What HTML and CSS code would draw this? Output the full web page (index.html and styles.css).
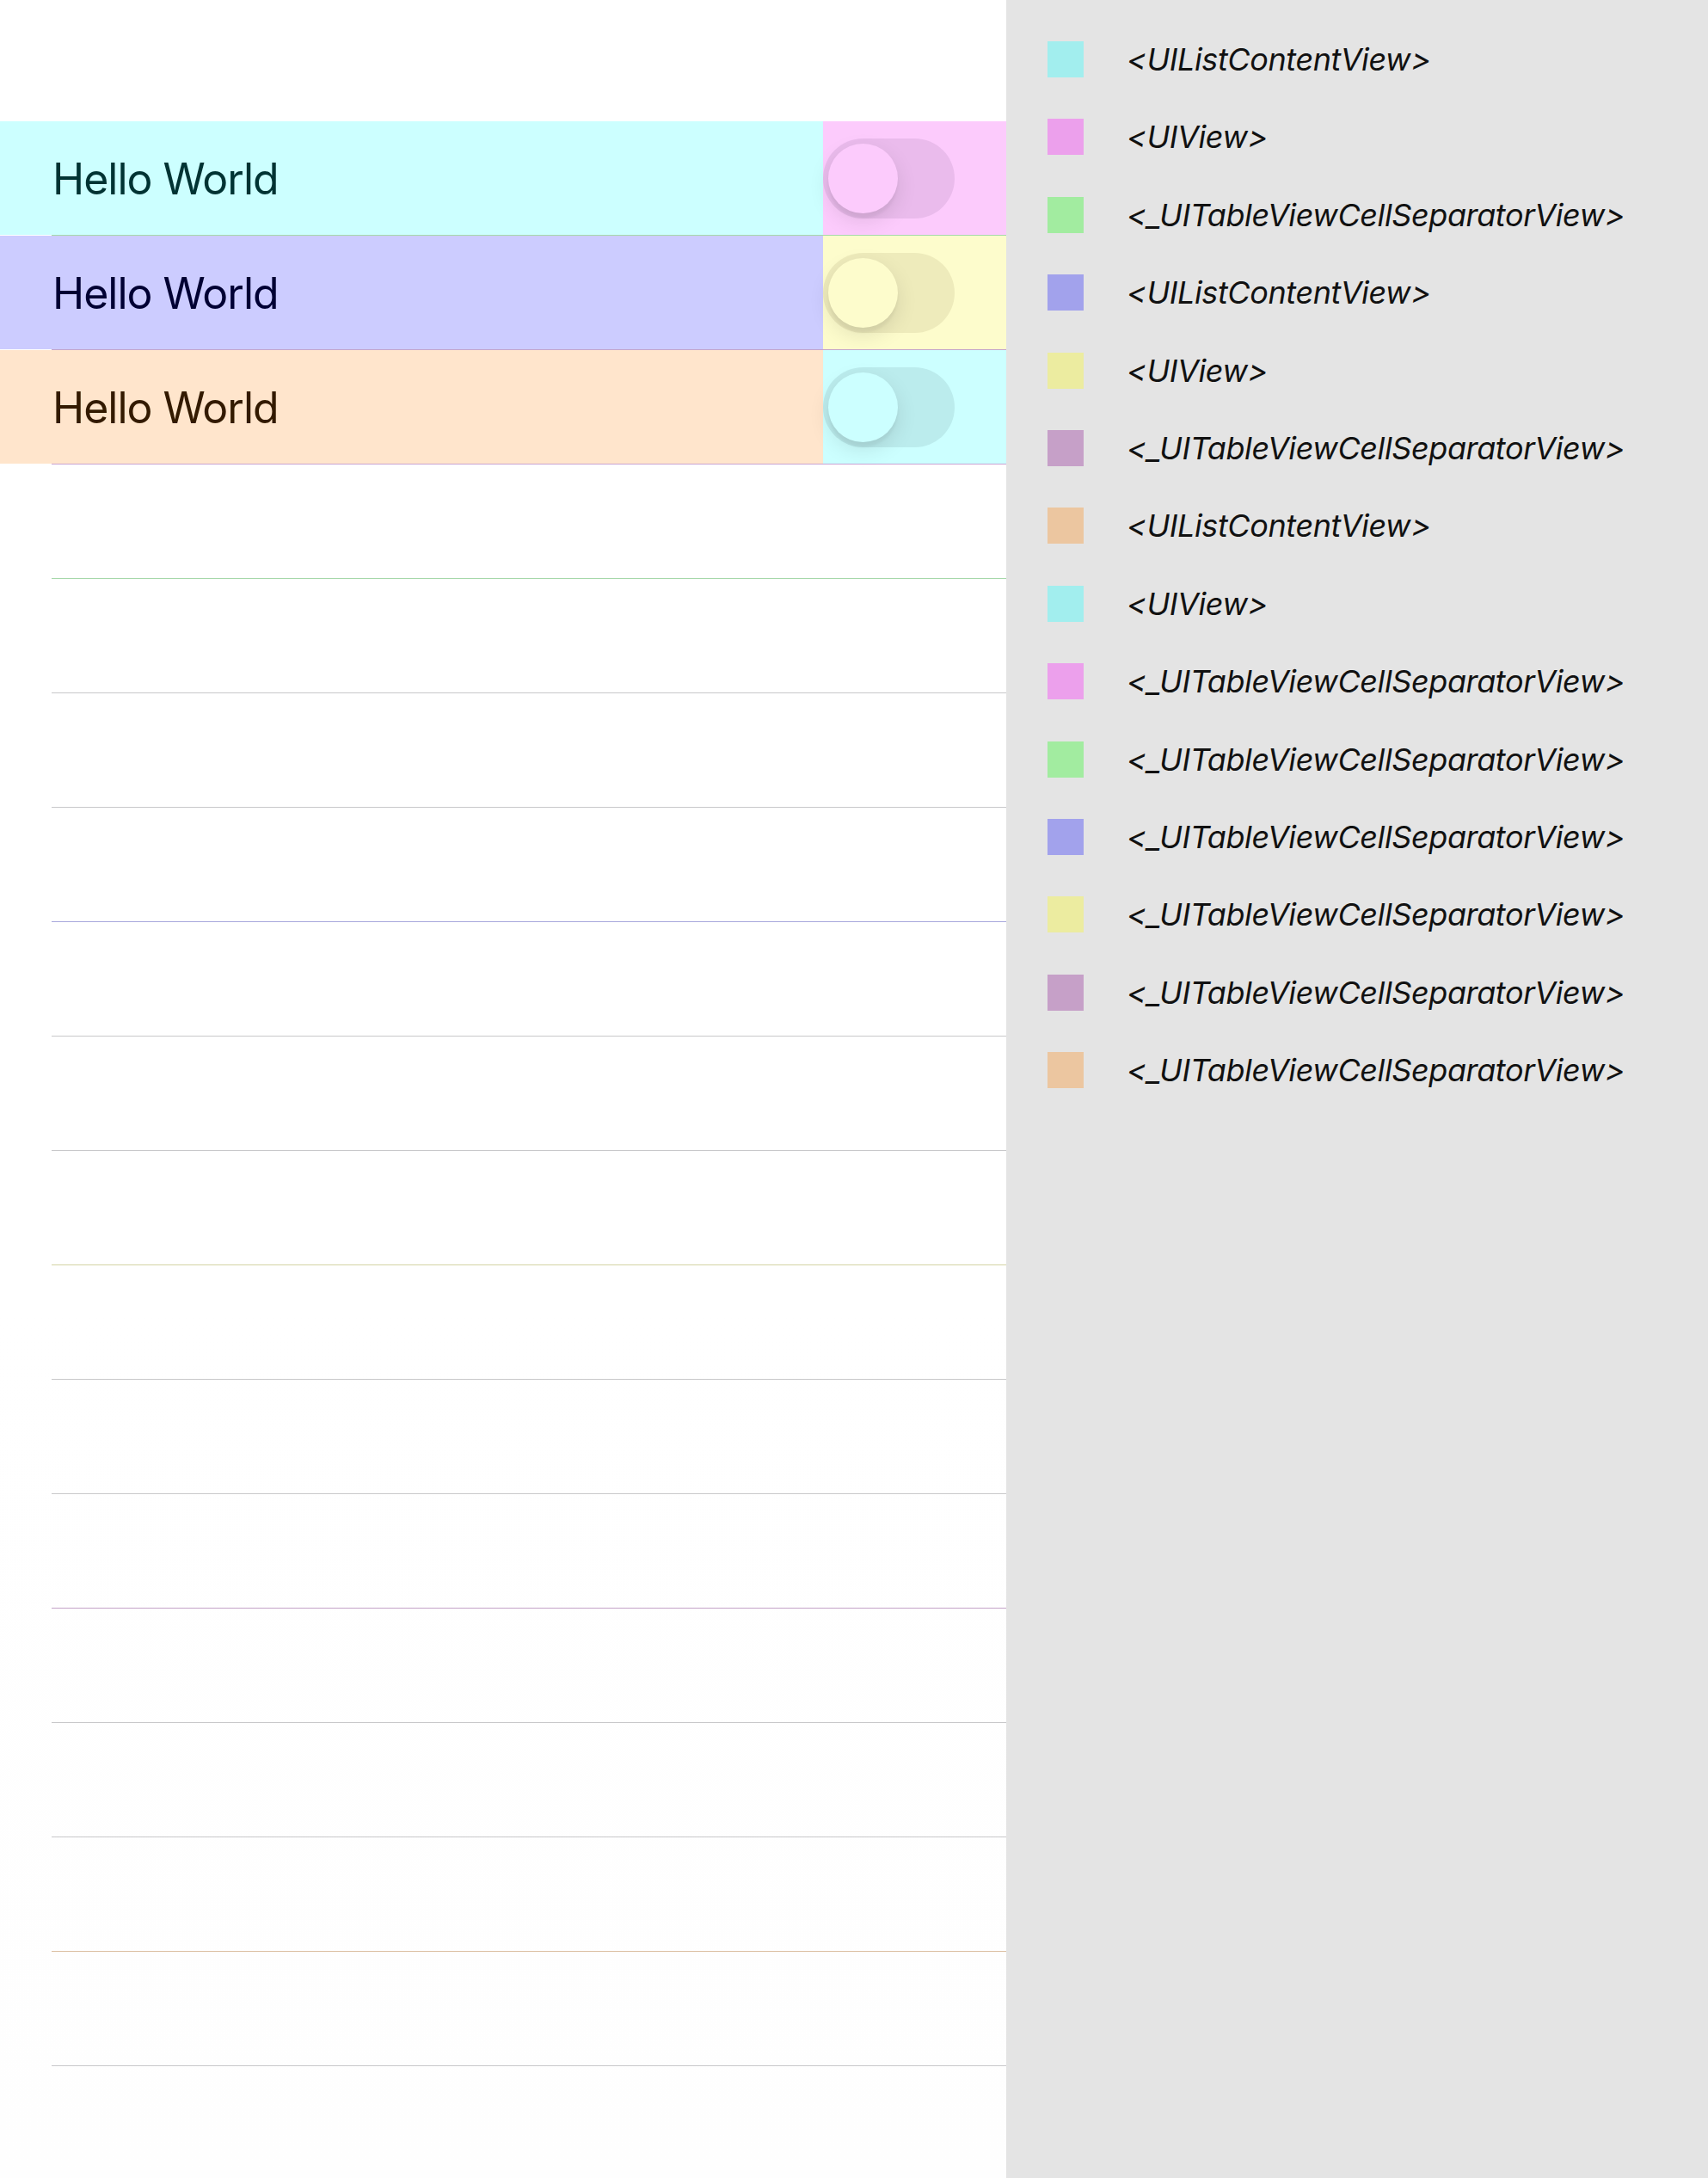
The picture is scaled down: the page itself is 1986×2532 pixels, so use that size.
FILE: index.html
```html
<!DOCTYPE html>
<html>
<head>
<meta charset="utf-8">
<link rel="stylesheet" href="styles.css">
</head>
<body>
<div class="screen">
  <div class="table">
    <div class="row">
      <div class="cell">
        <div class="content c1"><span class="label t1">Hello World</span></div>
        <div class="accessory a1"><div class="switch s1"><div class="thumb"></div></div></div>
      </div>
      <div class="sep sep-green"></div>
    </div>
    <div class="row">
      <div class="cell">
        <div class="content c2"><span class="label t2">Hello World</span></div>
        <div class="accessory a2"><div class="switch s2"><div class="thumb"></div></div></div>
      </div>
      <div class="sep sep-purple"></div>
    </div>
    <div class="row">
      <div class="cell">
        <div class="content c3"><span class="label t3">Hello World</span></div>
        <div class="accessory a3"><div class="switch s3"><div class="thumb"></div></div></div>
      </div>
      <div class="sep sep-pink"></div>
    </div>
    <div class="row"><div class="cell"></div><div class="sep sep-green"></div></div>
    <div class="row"><div class="cell"></div><div class="sep"></div></div>
    <div class="row"><div class="cell"></div><div class="sep"></div></div>
    <div class="row"><div class="cell"></div><div class="sep sep-blue"></div></div>
    <div class="row"><div class="cell"></div><div class="sep"></div></div>
    <div class="row"><div class="cell"></div><div class="sep"></div></div>
    <div class="row"><div class="cell"></div><div class="sep sep-yellow"></div></div>
    <div class="row"><div class="cell"></div><div class="sep"></div></div>
    <div class="row"><div class="cell"></div><div class="sep"></div></div>
    <div class="row"><div class="cell"></div><div class="sep sep-purple2"></div></div>
    <div class="row"><div class="cell"></div><div class="sep"></div></div>
    <div class="row"><div class="cell"></div><div class="sep"></div></div>
    <div class="row"><div class="cell"></div><div class="sep sep-tan"></div></div>
    <div class="row"><div class="cell"></div><div class="sep"></div></div>
  </div>
  <div class="legend">
    <div class="item"><span class="sw cyan"></span><span class="name">&lt;UIListContentView&gt;</span></div>
    <div class="item"><span class="sw pink"></span><span class="name">&lt;UIView&gt;</span></div>
    <div class="item"><span class="sw green"></span><span class="name">&lt;_UITableViewCellSeparatorView&gt;</span></div>
    <div class="item"><span class="sw blue"></span><span class="name">&lt;UIListContentView&gt;</span></div>
    <div class="item"><span class="sw yellow"></span><span class="name">&lt;UIView&gt;</span></div>
    <div class="item"><span class="sw purple"></span><span class="name">&lt;_UITableViewCellSeparatorView&gt;</span></div>
    <div class="item"><span class="sw tan"></span><span class="name">&lt;UIListContentView&gt;</span></div>
    <div class="item"><span class="sw cyan"></span><span class="name">&lt;UIView&gt;</span></div>
    <div class="item"><span class="sw pink"></span><span class="name">&lt;_UITableViewCellSeparatorView&gt;</span></div>
    <div class="item"><span class="sw green"></span><span class="name">&lt;_UITableViewCellSeparatorView&gt;</span></div>
    <div class="item"><span class="sw blue"></span><span class="name">&lt;_UITableViewCellSeparatorView&gt;</span></div>
    <div class="item"><span class="sw yellow"></span><span class="name">&lt;_UITableViewCellSeparatorView&gt;</span></div>
    <div class="item"><span class="sw purple"></span><span class="name">&lt;_UITableViewCellSeparatorView&gt;</span></div>
    <div class="item"><span class="sw tan"></span><span class="name">&lt;_UITableViewCellSeparatorView&gt;</span></div>
  </div>
</div>
</body>
</html>
```

FILE: styles.css
```css
html, body {
  margin: 0;
  padding: 0;
  background: #ffffff;
}
body {
  font-family: "Inter", "Noto Sans", "Liberation Sans", sans-serif;
}
.screen {
  display: flex;
  width: 1986px;
  height: 2532px;
  overflow: hidden;
}
.table {
  width: 1170px;
  flex: none;
  padding-top: 141px;
  background: linear-gradient(#ffffff 0%, #ffffff 60%, #fefefe 100%);
}
.row {
  height: 133px;
  display: flex;
  flex-direction: column;
}
.cell {
  height: 132px;
  display: flex;
}
.content {
  width: 957px;
  display: flex;
  align-items: center;
  padding-left: 61px;
  padding-top: 2px;
  box-sizing: border-box;
}
.label {
  font-size: 50px;
  letter-spacing: -1px;
  line-height: 1;
}
.c1 { background: #ccffff; }
.c2 { background: #ccccff; }
.c3 { background: #ffe5cc; }
.t1 { color: #003333; }
.t2 { color: #000033; }
.t3 { color: #331a00; }
.accessory {
  flex: 1;
  display: flex;
  align-items: center;
}
.a1 { background: #fccbfc; }
.a2 { background: #fdfccc; }
.a3 { background: #ccffff; }
.switch {
  width: 153px;
  height: 93px;
  border-radius: 47px;
  box-sizing: border-box;
  padding: 6px;
}
.s1 { background: #eabbec; }
.s2 { background: #eeebbb; }
.s3 { background: #bbeced; }
.thumb {
  width: 81px;
  height: 81px;
  border-radius: 50%;
  box-shadow: 0 9px 24px rgba(0, 0, 0, 0.10), 0 6px 3px rgba(0, 0, 0, 0.04);
}
.s1 .thumb { background: #fccbfc; }
.s2 .thumb { background: #fdfccc; }
.s3 .thumb { background: #ccffff; }
.sep {
  height: 1px;
  margin-left: 60px;
  background: #c8c8ca;
}
.sep-green { background: #a6d8aa; }
.sep-purple { background: #c3a5cb; }
.sep-pink { background: #c9a3d3; }
.sep-blue { background: #a7a7dc; }
.sep-yellow { background: #d4d4a4; }
.sep-purple2 { background: #c4a3c8; }
.sep-tan { background: #dbbfa2; }

.legend {
  flex: 1;
  background: #e4e4e4;
  padding: 48px 0 0 48px;
  display: flex;
  flex-direction: column;
  gap: 48.4px;
}
.item {
  display: flex;
  align-items: center;
  height: 42px;
}
.sw {
  width: 42px;
  height: 42px;
  flex: none;
  margin-right: 50px;
}
.name {
  font-size: 36px;
  font-style: italic;
  color: #111111;
  letter-spacing: -0.4px;
  white-space: nowrap;
}
.cyan { background: #a2eeee; }
.pink { background: #eca0ec; }
.green { background: #a2eca0; }
.blue { background: #a2a2ec; }
.yellow { background: #ececa0; }
.purple { background: #c6a0c8; }
.tan { background: #ecc6a0; }
```
